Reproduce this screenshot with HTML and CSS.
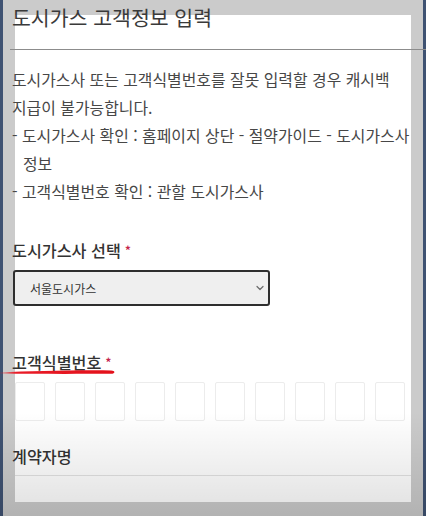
FILE: index.html
```html
<!DOCTYPE html>
<html lang="ko">
<head>
<meta charset="utf-8">
<title>도시가스 고객정보 입력</title>
<link rel="stylesheet" href="styles.css">
</head>
<body>
<div class="panel">
  <div class="content">
    <header class="head">
      <h1 class="title">도시가스 고객정보 입력</h1>
    </header>
    <hr class="rule">
    <div class="notice">
      <p class="lead">도시가스사 또는 고객식별번호를 잘못 입력할 경우 캐시백 지급이 불가능합니다.</p>
      <p class="item">- 도시가스사 확인 : 홈페이지 상단 - 절약가이드 - 도시가스사 정보</p>
      <p class="item">- 고객식별번호 확인 : 관할 도시가스사</p>
    </div>

    <div class="field field-company">
      <div class="label">도시가스사 선택<span class="req">*</span></div>
      <div class="select">
        <span class="select-text">서울도시가스</span>
        <svg class="chev" width="8" height="6" viewBox="0 0 8 6"><path d="M1 1.5 L4 4.5 L7 1.5" fill="none" stroke="#6a6a6a" stroke-width="1.2" stroke-linecap="round" stroke-linejoin="round"/></svg>
      </div>
    </div>

    <div class="field field-id">
      <div class="label">고객식별번호<span class="req">*</span></div>
      <div class="boxes">
        <span class="box"></span><span class="box"></span><span class="box"></span><span class="box"></span><span class="box"></span><span class="box"></span><span class="box"></span><span class="box"></span><span class="box"></span><span class="box"></span>
      </div>
    </div>

    <div class="field field-name">
      <div class="label">계약자명</div>
    </div>
  </div>
  <div class="name-input"></div>
</div>

<svg class="marker" width="118" height="10" viewBox="0 0 118 10">
  <defs>
    <linearGradient id="mk" x1="0" y1="0" x2="1" y2="0">
      <stop offset="0" stop-color="#e8101c" stop-opacity="0.2"/>
      <stop offset="0.14" stop-color="#e8101c" stop-opacity="0.95"/>
      <stop offset="1" stop-color="#e3101a" stop-opacity="1"/>
    </linearGradient>
  </defs>
  <path d="M0 5.4 C 30 4.2, 70 3.0, 111 3.4 C 115.5 3.6, 115.5 6.6, 111 6.8 C 75 7.0, 35 7.0, 0 6.6 Z" fill="url(#mk)"/>
</svg>
<div class="fade"></div>
</body>
</html>
```

FILE: styles.css
```css
html, body {
  margin: 0;
  padding: 0;
}
html {
  overflow: hidden;
}
body {
  width: 426px;
  height: 516px;
  box-sizing: border-box;
  padding: 15px 15px 0 15px;
  background: #cbcbcb;
  box-shadow: inset 3px 0 0 #3f5272, inset -3px 0 0 #3f5272;
  font-family: "Noto Sans CJK KR", "Noto Sans", sans-serif;
  color: #333;
  position: relative;
  overflow: hidden;
  word-break: keep-all;
}
.panel {
  background: #fff;
  height: 487px;
  display: flex;
  flex-direction: column;
}
.content {
  margin: -11px -6px 0 -3px;
}
.head {
  height: 45px;
}
.title {
  margin: 0;
  font-size: 20.5px;
  line-height: 26px;
  font-weight: 400;
  color: #3a3a3a;
}
.rule {
  margin: 0 -9px 0 -2px;
  border: 0;
  border-top: 1px solid #8c8c8c;
  height: 0;
}
.notice {
  margin-top: 16px;
  font-size: 15.9px;
  line-height: 28px;
  color: #474747;
}
.notice p {
  margin: 0;
}
.item {
  padding-left: 11px;
  text-indent: -11px;
}
.field-company {
  margin-top: 33px;
}
.label {
  font-size: 16.2px;
  line-height: 22px;
  font-weight: 500;
  color: #333;
}
.req {
  color: #c4234a;
  font-size: 13px;
  margin-left: 4px;
  position: relative;
  top: -1px;
}
.select {
  margin: 7px 0 0 1px;
  width: 257px;
  height: 36px;
  box-sizing: border-box;
  border: 2px solid #2e2e2e;
  border-radius: 3px;
  background: #efefef;
  display: flex;
  align-items: center;
  justify-content: space-between;
  padding: 0 4px 0 15px;
}
.select-text {
  font-size: 12px;
  color: #333;
}
.chev {
  display: block;
}
.field-id {
  margin-top: 45px;
}
.boxes {
  margin: 7px 0 0 3px;
  display: flex;
  gap: 10px;
}
.box {
  width: 30px;
  height: 39px;
  box-sizing: border-box;
  border: 1px solid #ececec;
  border-radius: 2px;
  background: #fff;
}
.field-name {
  margin-top: 24px;
}
.name-input {
  margin-top: 8px;
  flex: 1;
  border-top: 1px solid #e3e3e3;
}
.marker {
  position: absolute;
  left: 0;
  top: 367px;
}
.fade {
  position: absolute;
  left: 0;
  right: 0;
  top: 412px;
  bottom: 0;
  background: linear-gradient(to bottom, rgba(0,0,0,0) 0%, rgba(0,0,0,0.1) 85%, rgba(0,0,0,0.12) 100%);
  pointer-events: none;
}
```
